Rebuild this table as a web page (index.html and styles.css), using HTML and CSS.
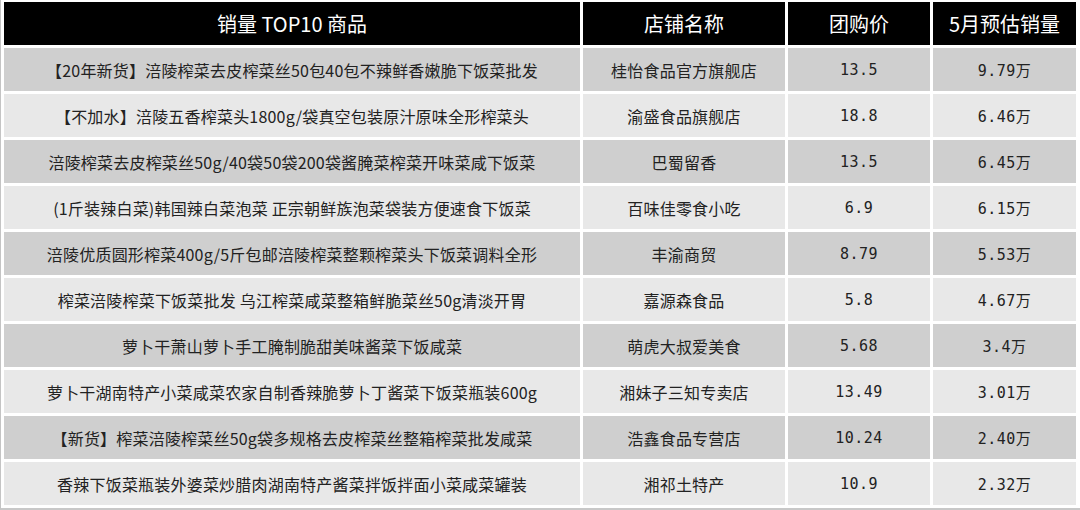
FILE: index.html
```html
<!DOCTYPE html>
<html lang="zh-CN">
<head>
<meta charset="utf-8">
<title>销量 TOP10 商品</title>
<link rel="stylesheet" href="styles.css">
</head>
<body>
<div class="frame">
<table class="rank">
  <colgroup>
    <col class="c-name"><col class="c-shop"><col class="c-price"><col class="c-sales">
  </colgroup>
  <thead>
    <tr><th>销量 TOP10 商品</th><th>店铺名称</th><th>团购价</th><th>5月预估销量</th></tr>
  </thead>
  <tbody>
    <tr class="dark"><td>【20年新货】涪陵榨菜去皮榨菜丝50包40包不辣鲜香嫩脆下饭菜批发</td><td>桂怡食品官方旗舰店</td><td class="num">13.5</td><td class="num">9.79万</td></tr>
    <tr class="light"><td>【不加水】涪陵五香榨菜头1800g/袋真空包装原汁原味全形榨菜头</td><td>渝盛食品旗舰店</td><td class="num">18.8</td><td class="num">6.46万</td></tr>
    <tr class="dark"><td>涪陵榨菜去皮榨菜丝50g/40袋50袋200袋酱腌菜榨菜开味菜咸下饭菜</td><td>巴蜀留香</td><td class="num">13.5</td><td class="num">6.45万</td></tr>
    <tr class="light"><td>(1斤装辣白菜)韩国辣白菜泡菜 正宗朝鲜族泡菜袋装方便速食下饭菜</td><td>百味佳零食小吃</td><td class="num">6.9</td><td class="num">6.15万</td></tr>
    <tr class="dark"><td>涪陵优质圆形榨菜400g/5斤包邮涪陵榨菜整颗榨菜头下饭菜调料全形</td><td>丰渝商贸</td><td class="num">8.79</td><td class="num">5.53万</td></tr>
    <tr class="light"><td>榨菜涪陵榨菜下饭菜批发 乌江榨菜咸菜整箱鲜脆菜丝50g清淡开胃</td><td>嘉源森食品</td><td class="num">5.8</td><td class="num">4.67万</td></tr>
    <tr class="dark"><td>萝卜干萧山萝卜手工腌制脆甜美味酱菜下饭咸菜</td><td>萌虎大叔爱美食</td><td class="num">5.68</td><td class="num">3.4万</td></tr>
    <tr class="light"><td>萝卜干湖南特产小菜咸菜农家自制香辣脆萝卜丁酱菜下饭菜瓶装600g</td><td>湘妹子三知专卖店</td><td class="num">13.49</td><td class="num">3.01万</td></tr>
    <tr class="dark"><td>【新货】榨菜涪陵榨菜丝50g袋多规格去皮榨菜丝整箱榨菜批发咸菜</td><td>浩鑫食品专营店</td><td class="num">10.24</td><td class="num">2.40万</td></tr>
    <tr class="light"><td>香辣下饭菜瓶装外婆菜炒腊肉湖南特产酱菜拌饭拌面小菜咸菜罐装</td><td>湘祁土特产</td><td class="num">10.9</td><td class="num">2.32万</td></tr>
  </tbody>
</table>
</div>
</body>
</html>
```

FILE: styles.css
```css
html, body {
  margin: 0;
  padding: 0;
  background: #ffffff;
}

body {
  font-family: "Noto Sans CJK SC", "Noto Sans", sans-serif;
  color: #222222;
}

.frame {
  width: 1080px;
  height: 510px;
  box-sizing: border-box;
  border-left: 1px solid #c4c4c4;
  border-bottom: 2px solid #c8c8c8;
  overflow: hidden;
}

.rank {
  border-collapse: separate;
  border-spacing: 3px;
  table-layout: fixed;
  width: 1078px;
  margin-top: -1px;
}

.c-name { width: 576px; }
.c-shop { width: 202px; }
.c-price { width: 142px; }
.c-sales { width: 143px; }

.rank th {
  background: #000000;
  color: #ffffff;
  font-weight: normal;
  font-size: 20px;
  height: 43px;
  padding: 0;
  text-align: center;
  white-space: nowrap;
}

.rank td {
  height: 43px;
  padding: 0;
  font-size: 16px;
  text-align: center;
  white-space: nowrap;
  letter-spacing: 0.2px;
}

.rank tr.dark td { background: #cfcfcf; }
.rank tr.light td { background: #e8e8e8; }

.rank td.num {
  font-family: "DejaVu Sans Mono", "Noto Sans CJK SC", monospace;
  font-size: 15px;
  letter-spacing: 0.5px;
}
```
